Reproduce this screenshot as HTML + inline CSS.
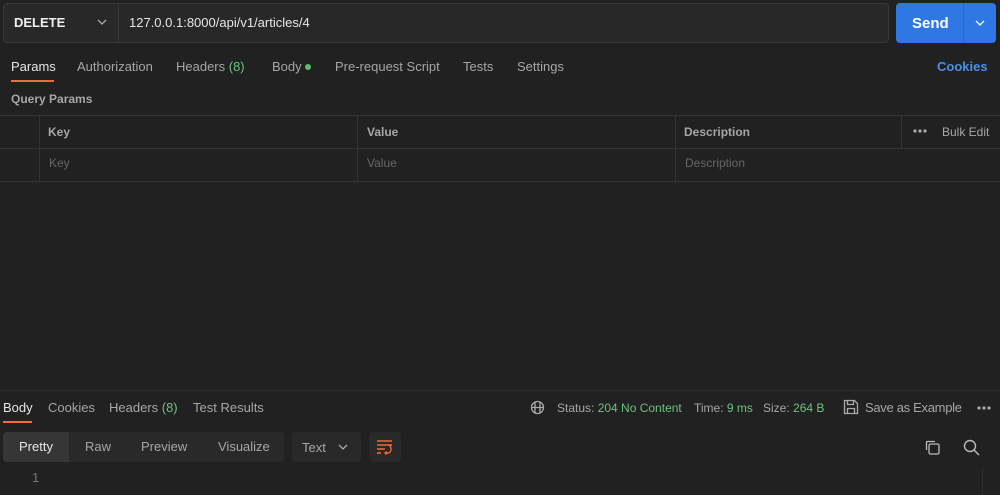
<!DOCTYPE html>
<html><head><style>
*{box-sizing:border-box;margin:0;padding:0}
body{width:1000px;height:495px;background:#212121;font-family:"Liberation Sans",sans-serif;font-size:13px;color:#a6a6a6;position:relative;overflow:hidden}
.a{position:absolute;white-space:nowrap}
.w{color:#e6e6e6}
.g{color:#6cc27f}
.vl{position:absolute;width:1px;background:#333}
.hl{position:absolute;height:1px;background:#333}
</style></head><body>
<div class="a" style="left:3px;top:3px;width:886px;height:40px;background:#282828;border:1px solid #383838;border-radius:4px"></div>
<div class="vl" style="left:118px;top:4px;height:38px;background:#383838"></div>
<div class="a" style="left:14px;top:15px;font-weight:bold;color:#f0f0f0">DELETE</div>
<svg class="a" style="left:97px;top:19px" width="10" height="6"><path d="M1 1l4 4 4-4" stroke="#aaa" fill="none" stroke-width="1.3"/></svg>
<div class="a w" style="left:129px;top:15px">127.0.0.1:8000/api/v1/articles/4</div>
<div class="a" style="left:896px;top:3px;width:100px;height:40px;background:#2f78e4;border-radius:4px"></div>
<div class="vl" style="left:963px;top:3px;height:40px;background:#2a68c4"></div>
<div class="a" style="left:912px;top:14px;font-size:15px;font-weight:bold;color:#fff;top:15px">Send</div>
<svg class="a" style="left:975px;top:20px" width="10" height="6"><path d="M1 1l4 4 4-4" stroke="#fff" fill="none" stroke-width="1.3"/></svg>

<div class="a w" style="left:11px;top:59px">Params</div>
<div class="a" style="left:11px;top:80px;width:43px;height:2px;background:#f26b3a"></div>
<div class="a" style="left:77px;top:59px">Authorization</div>
<div class="a" style="left:176px;top:59px">Headers <span class="g">(8)</span></div>
<div class="a" style="left:272px;top:59px">Body <span style="display:inline-block;width:6px;height:6px;border-radius:3px;background:#5bbf6b;vertical-align:1px"></span></div>
<div class="a" style="left:335px;top:59px">Pre-request Script</div>
<div class="a" style="left:463px;top:59px">Tests</div>
<div class="a" style="left:517px;top:59px">Settings</div>
<div class="a" style="left:937px;top:59px;color:#4a90e2;font-weight:bold">Cookies</div>
<div class="a" style="left:11px;top:92px;font-weight:bold;font-size:12px">Query Params</div>

<div class="hl" style="left:0;top:115px;width:1000px"></div>
<div class="hl" style="left:0;top:148px;width:1000px"></div>
<div class="hl" style="left:0;top:181px;width:1000px"></div>
<div class="vl" style="left:39px;top:115px;height:66px"></div>
<div class="vl" style="left:357px;top:115px;height:66px"></div>
<div class="vl" style="left:675px;top:115px;height:66px"></div>
<div class="vl" style="left:901px;top:115px;height:33px"></div>
<div class="a" style="left:48px;top:125px;font-weight:bold;font-size:12px">Key</div>
<div class="a" style="left:367px;top:125px;font-weight:bold;font-size:12px">Value</div>
<div class="a" style="left:684px;top:125px;font-weight:bold;font-size:12px">Description</div>
<svg class="a" style="left:913px;top:129px" width="14" height="4" fill="#aaa"><circle cx="2" cy="2" r="1.6"/><circle cx="7" cy="2" r="1.6"/><circle cx="12" cy="2" r="1.6"/></svg>
<div class="a" style="left:942px;top:125px;font-size:12px">Bulk Edit</div>
<div class="a" style="left:49px;top:156px;color:#666;font-size:12px">Key</div>
<div class="a" style="left:367px;top:156px;color:#666;font-size:12px">Value</div>
<div class="a" style="left:685px;top:156px;color:#666;font-size:12px">Description</div>

<div class="hl" style="left:0;top:390px;width:1000px;background:#2c2c2c"></div>
<div class="a w" style="left:3px;top:400px">Body</div>
<div class="a" style="left:3px;top:421px;width:29px;height:2px;background:#f26b3a"></div>
<div class="a" style="left:48px;top:400px">Cookies</div>
<div class="a" style="left:109px;top:400px">Headers <span class="g">(8)</span></div>
<div class="a" style="left:193px;top:400px">Test Results</div>
<svg class="a" style="left:530px;top:400px" width="15" height="15" fill="none" stroke="#aaa" stroke-width="1.3"><circle cx="7.5" cy="7.5" r="6"/><path d="M1.5 7.5h12M5 2.5v10M10 2.5v10"/></svg>
<div class="a" style="left:557px;top:401px;font-size:12px">Status: <span class="g">204 No Content</span></div>
<div class="a" style="left:694px;top:401px;font-size:12px">Time: <span class="g">9 ms</span></div>
<div class="a" style="left:763px;top:401px;font-size:12px">Size: <span class="g">264 B</span></div>
<svg class="a" style="left:843px;top:399px" width="16" height="16" fill="none" stroke="#aaa" stroke-width="1.3"><path d="M1.5 1.5h10l3 3v10h-13z M4.5 1.5v4h6v-4 M4.5 14.5v-5h7v5"/></svg>
<div class="a" style="left:865px;top:400px;letter-spacing:-0.3px">Save as Example</div>
<svg class="a" style="left:977px;top:406px" width="14" height="4" fill="#aaa"><circle cx="2" cy="2" r="1.6"/><circle cx="7" cy="2" r="1.6"/><circle cx="12" cy="2" r="1.6"/></svg>

<div class="a" style="left:3px;top:432px;width:281px;height:30px;background:#292929;border-radius:4px"></div>
<div class="a" style="left:3px;top:432px;width:66px;height:30px;background:#363636;border-radius:4px 0 0 4px"></div>
<div class="a w" style="left:19px;top:439px">Pretty</div>
<div class="a" style="left:85px;top:439px">Raw</div>
<div class="a" style="left:141px;top:439px">Preview</div>
<div class="a" style="left:218px;top:439px">Visualize</div>
<div class="a" style="left:292px;top:432px;width:69px;height:30px;background:#292929;border-radius:4px"></div>
<div class="a" style="left:302px;top:440px">Text</div>
<svg class="a" style="left:338px;top:444px" width="10" height="6"><path d="M1 1l4 4 4-4" stroke="#aaa" fill="none" stroke-width="1.3"/></svg>
<div class="a" style="left:369px;top:432px;width:32px;height:30px;background:#292929;border-radius:4px"></div>
<svg class="a" style="left:376px;top:439px" width="18" height="16" fill="none" stroke="#f26b3a" stroke-width="1.4"><path d="M1 2h15M1 6h15M1 10h8M1 14h4M12 6c4 0 4 8 0 8h-3M10.5 12.5l-1.5 1.5 1.5 1.5"/></svg>
<svg class="a" style="left:924px;top:439px" width="17" height="17" fill="none" stroke="#bbb" stroke-width="1.3"><rect x="5" y="5" width="10" height="10" rx="1.5"/><path d="M11 2.5H3.5a1 1 0 0 0-1 1V11"/></svg>
<svg class="a" style="left:963px;top:439px" width="17" height="17" fill="none" stroke="#bbb" stroke-width="1.4"><circle cx="7" cy="7" r="5.5"/><path d="M11 11l5 5"/></svg>
<div class="a" style="left:32px;top:470px;color:#777">1</div>
<div class="vl" style="left:982px;top:467px;height:28px;background:#2c2c2c"></div>
</body></html>
